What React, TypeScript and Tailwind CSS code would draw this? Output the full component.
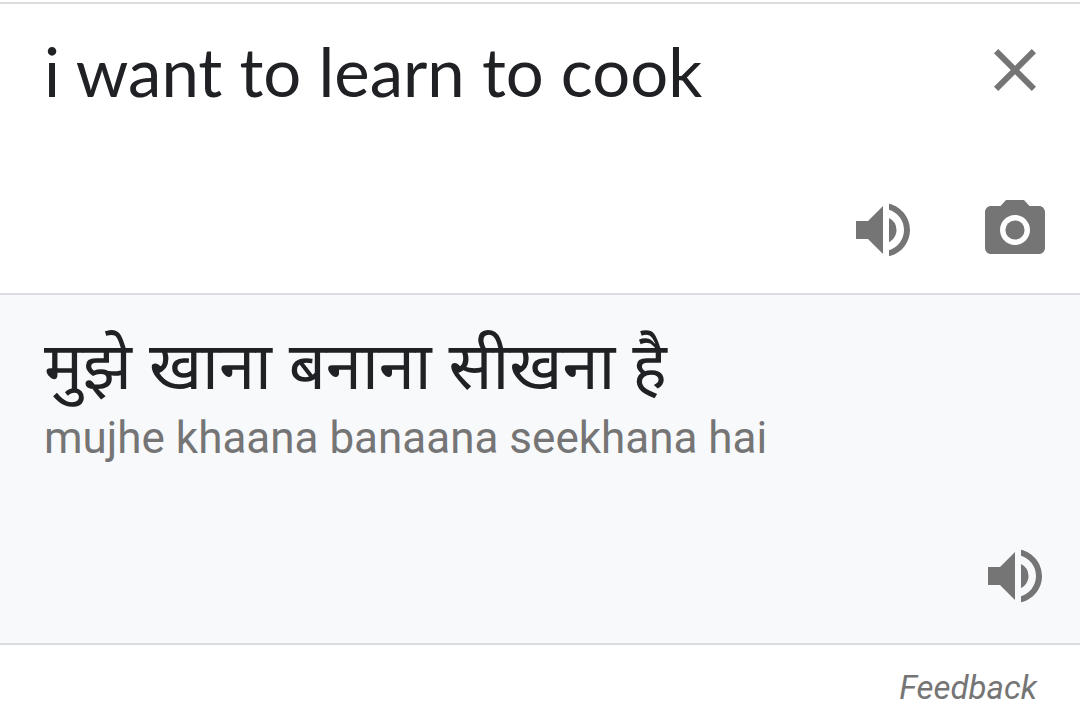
import type React from 'react'
import { useState } from 'react'
import { MdCameraAlt, MdClose, MdVolumeUp } from 'react-icons/md'

const TRANSLATION = {
  source: 'i want to learn to cook',
  target: 'मुझे खाना बनाना सीखना है',
  romanized: 'mujhe khaana banaana seekhana hai',
}

const App: React.FC = () => {
  const [text, setText] = useState(TRANSLATION.source)

  return (
    <main className="min-h-screen bg-white font-[Roboto,'Noto_Sans',sans-serif] text-[#202124]">
      {/* Source text */}
      <section className="mt-[2px] flex flex-col border-y-2 border-[#dadce0] pt-[30px] pr-[29px] pb-[27px] pl-11">
        <div className="flex items-start justify-between">
          <input
            type="text"
            aria-label="Source text"
            value={text}
            onChange={(e) => setText(e.target.value)}
            className="h-[74px] min-w-0 flex-1 bg-transparent font-[Lato,sans-serif] text-[67px] outline-none"
          />
          <button type="button" aria-label="Clear" onClick={() => setText('')} className="text-[#757575]">
            <MdClose className="h-[72px] w-[72px]" />
          </button>
        </div>
        <div className="mt-[86px] flex items-center justify-end gap-[60px] text-[#757575]">
          <button type="button" aria-label="Listen to source text">
            <MdVolumeUp className="h-[72px] w-[72px]" />
          </button>
          <button type="button" aria-label="Camera">
            <MdCameraAlt className="h-[72px] w-[72px]" />
          </button>
        </div>
      </section>

      {/* Translation */}
      <section className="border-b-2 border-[#dadce0] bg-[#f8f9fb] pt-7 pr-[29px] pb-[31px] pl-11">
        <p lang="hi" className="font-['Noto_Sans',sans-serif] text-[65px] leading-[82px]">
          {TRANSLATION.target}
        </p>
        <p className="mt-1 text-[44px] leading-[58px] text-[#757575]">{TRANSLATION.romanized}</p>
        <div className="mt-[73px] flex justify-end text-[#757575]">
          <button type="button" aria-label="Listen to translation">
            <MdVolumeUp className="h-[72px] w-[72px]" />
          </button>
        </div>
      </section>

      <footer className="flex justify-end px-[43px] pt-[19px]">
        <a href="#feedback" className="text-[33px] leading-[48px] text-[#757575] italic">
          Feedback
        </a>
      </footer>
    </main>
  )
}

export default App
